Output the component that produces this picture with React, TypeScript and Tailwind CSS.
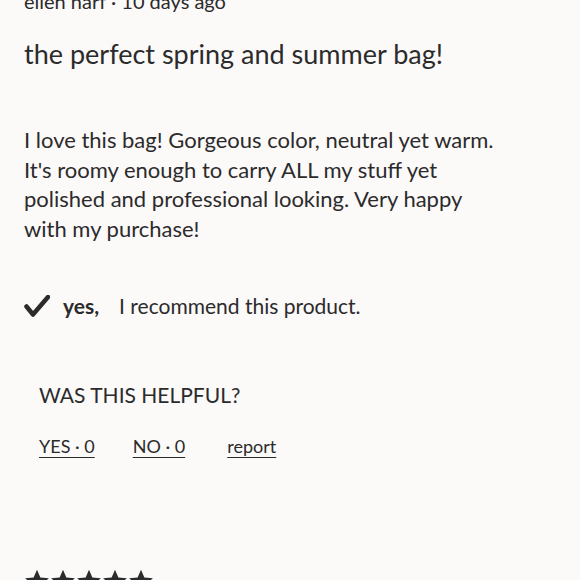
import React from 'react';

const font = { fontFamily: 'Lato, "Noto Sans", sans-serif' };

function Star() {
  return (
    <svg width="26" height="26" viewBox="0 0 24 24" className="fill-[#2b2b2b]">
      <path d="M12 1.5l3.1 7.3 7.9.6-6 5.2 1.8 7.7L12 18.2l-6.8 4.1 1.8-7.7-6-5.2 7.9-.6z" />
    </svg>
  );
}

export default function App() {
  return (
    <div className="h-[580px] w-[580px] overflow-hidden bg-[#fcf9f9] text-[#2b2b2b]" style={font}>
      <div className="-mt-[10px] px-6">
        <p className="text-[20px] leading-[22px]">ellen harf · 10 days ago</p>
        <h2 className="mt-[24px] text-[27px] leading-[36px]">the perfect spring and summer bag!</h2>
        <p className="mt-[53px] text-[22px] leading-[29.5px]">
          I love this bag! Gorgeous color, neutral yet warm.
          <br />
          It's roomy enough to carry ALL my stuff yet
          <br />
          polished and professional looking. Very happy
          <br />
          with my purchase!
        </p>
        <div className="mt-[47px] flex items-center text-[21px]">
          <svg width="26" height="22" viewBox="0 0 26 22" className="mr-[13px]">
            <path d="M2.5 11.5l6.5 8L24 2" fill="none" stroke="#2b2b2b" strokeWidth="4.5" strokeLinecap="round" strokeLinejoin="round" />
          </svg>
          <span className="font-bold">yes,</span>
          <span className="ml-[20px]">I recommend this product.</span>
        </div>
        <div className="mt-[59px] pl-[15px]">
          <p className="text-[21px] leading-[28px] uppercase">Was this helpful?</p>
          <div className="mt-[25px] flex text-[18px] leading-[24px]">
            <a className="underline underline-offset-4">YES · 0</a>
            <a className="ml-[38px] underline underline-offset-4">NO · 0</a>
            <a className="ml-[42px] underline underline-offset-4">report</a>
          </div>
        </div>
        <div className="mt-[110px] flex">
          <Star />
          <Star />
          <Star />
          <Star />
          <Star />
        </div>
      </div>
    </div>
  );
}
